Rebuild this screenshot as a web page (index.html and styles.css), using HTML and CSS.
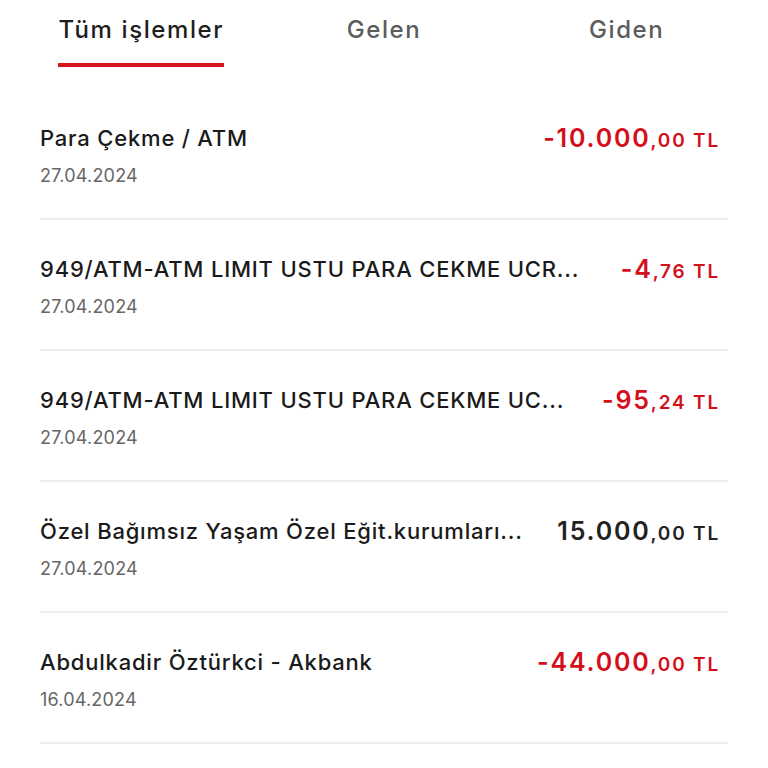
FILE: index.html
```html
<!DOCTYPE html>
<html lang="tr">
<head>
    <meta charset="UTF-8">
    <meta name="viewport" content="width=device-width, initial-scale=1.0">
    <title>Hesap Hareketleri</title>
    <link rel="stylesheet" href="styles.css">
</head>
<body>
    <div class="tabs">
        <div class="tab active"><span>Tüm işlemler</span></div>
        <div class="tab"><span>Gelen</span></div>
        <div class="tab"><span>Giden</span></div>
    </div>

    <ul class="tx-list">
        <li class="tx">
            <div class="tx-info">
                <div class="tx-title">Para Çekme / ATM</div>
                <div class="tx-date">27.04.2024</div>
            </div>
            <div class="tx-amount out">-10.000<small>,00 TL</small></div>
        </li>
        <li class="tx">
            <div class="tx-info">
                <div class="tx-title">949/ATM-ATM LIMIT USTU PARA CEKME UCR...</div>
                <div class="tx-date">27.04.2024</div>
            </div>
            <div class="tx-amount out">-4<small>,76 TL</small></div>
        </li>
        <li class="tx">
            <div class="tx-info">
                <div class="tx-title">949/ATM-ATM LIMIT USTU PARA CEKME UC...</div>
                <div class="tx-date">27.04.2024</div>
            </div>
            <div class="tx-amount out">-95<small>,24 TL</small></div>
        </li>
        <li class="tx">
            <div class="tx-info">
                <div class="tx-title">Özel Bağımsız Yaşam Özel Eğit.kurumları...</div>
                <div class="tx-date">27.04.2024</div>
            </div>
            <div class="tx-amount">15.000<small>,00 TL</small></div>
        </li>
        <li class="tx">
            <div class="tx-info">
                <div class="tx-title">Abdulkadir Öztürkci - Akbank</div>
                <div class="tx-date">16.04.2024</div>
            </div>
            <div class="tx-amount out">-44.000<small>,00 TL</small></div>
        </li>
    </ul>
</body>
</html>
```

FILE: styles.css
```css
body {
    font-family: Inter, "Noto Sans", sans-serif;
    margin: 0;
    padding: 0;
    background-color: #fff;
    color: #1a1a1a;
}
.tabs {
    display: grid;
    grid-template-columns: repeat(3, 1fr);
    padding: 0 20px;
    margin-bottom: 22px;
}
.tab {
    display: flex;
    justify-content: center;
    padding-top: 15px;
}
.tab span {
    display: block;
    font-size: 24px;
    font-weight: 500;
    line-height: 30px;
    letter-spacing: 1.6px;
    color: #5c5c5c;
    padding-bottom: 18px;
    border-bottom: 4px solid transparent;
}
.tab.active span {
    color: #1e1e1e;
    border-bottom-color: #d7141e;
}
.tx-list {
    list-style: none;
    margin: 0;
    padding: 0 40px;
}
.tx {
    display: flex;
    align-items: flex-start;
    justify-content: space-between;
    gap: 16px;
    padding: 35px 8px 30px 0;
    border-bottom: 2px solid #ededed;
}
.tx-title {
    font-size: 22px;
    font-weight: 500;
    line-height: 28px;
    letter-spacing: 0.8px;
    white-space: nowrap;
}
.tx-date {
    margin-top: 12px;
    font-size: 18px;
    line-height: 24px;
    letter-spacing: 0.2px;
    color: #666;
}
.tx-amount {
    flex-shrink: 0;
    font-size: 25px;
    font-weight: 600;
    line-height: 28px;
    letter-spacing: 1.8px;
    white-space: nowrap;
    color: #222;
}
.tx-amount small {
    font-size: 19px;
    letter-spacing: 1.8px;
}
.tx-amount.out {
    color: #d40f1c;
}
```
